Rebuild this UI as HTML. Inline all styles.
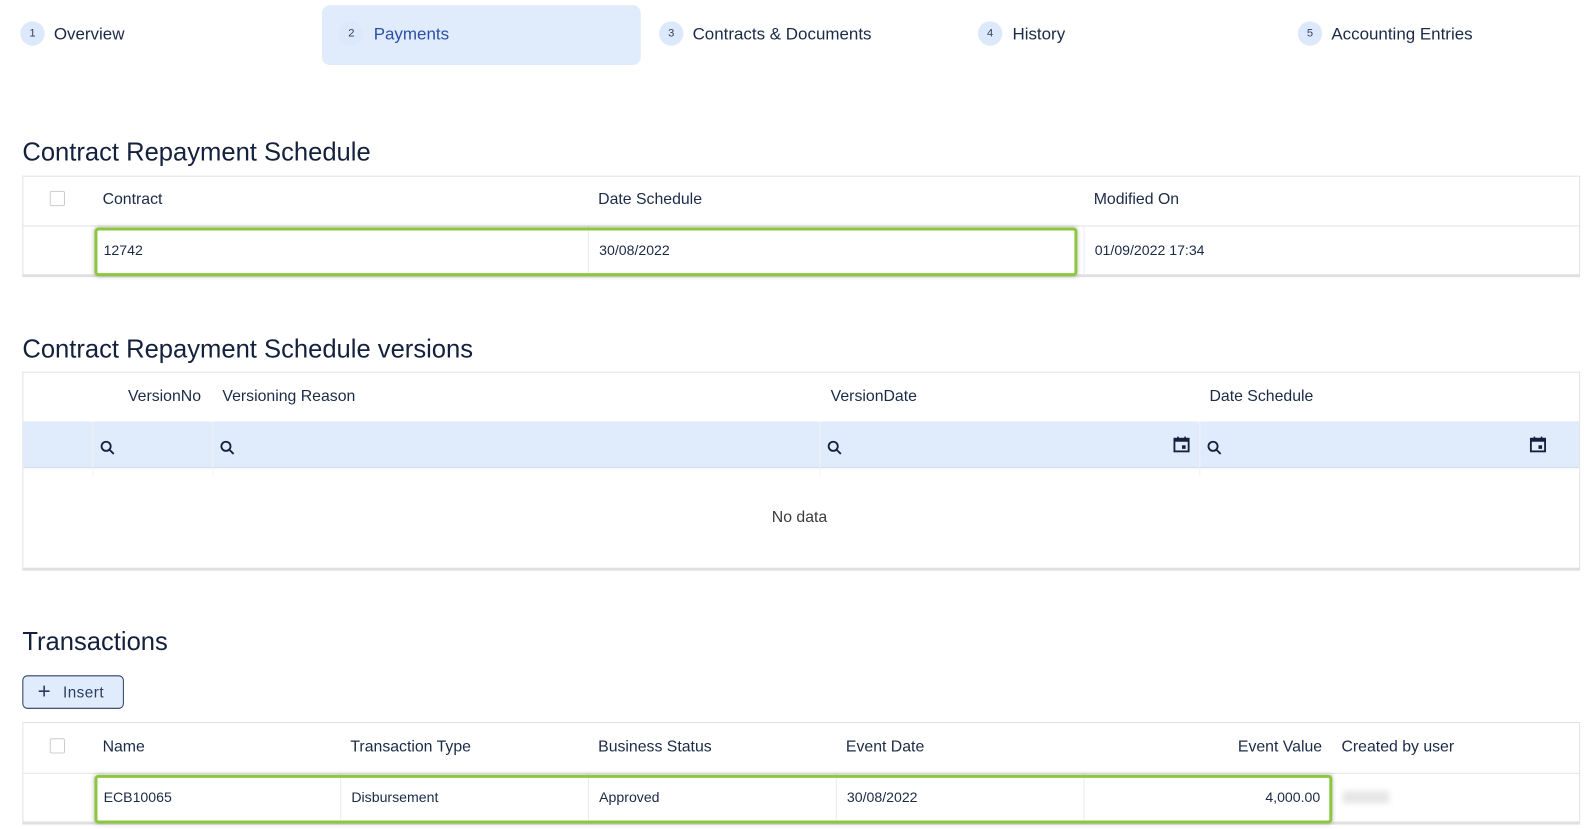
<!DOCTYPE html>
<html><head><meta charset="utf-8"><style>
*{box-sizing:border-box;margin:0;padding:0}
body{width:1592px;height:828px;background:#fff;font-family:"Liberation Sans",sans-serif;color:#1b2a47;position:relative;overflow:hidden}
#w{position:absolute;left:0;top:0;width:1568px;height:816px;transform:scale(1.0155);transform-origin:0 0}
.a{position:absolute;white-space:nowrap}
.step{font-size:16.7px}
.num{position:absolute;width:24px;height:24px;border-radius:50%;background:#dce8fb;font-size:11px;text-align:center;line-height:24px;color:#33415c}
h2{position:absolute;font-weight:normal;font-size:25.2px;color:#14213d}
.tbl{position:absolute;left:22px;width:1534px;border:1px solid #e2e2e2;border-bottom:3px solid #e0e0e0;background:#fff}
.hd{font-size:15.6px}
.cell{font-size:13.9px}
.vl{position:absolute;width:1px;background:#e8edf3}
.hl{position:absolute;border:3px solid #8dc63f;border-radius:4px;box-shadow:0 0 4px rgba(0,0,0,.25)}
.cb{position:absolute;width:15px;height:15px;border:1px solid #ccc;border-radius:2px}
</style></head><body><div id="w">
<div class="a" style="left:317px;top:5px;width:314px;height:59px;background:#e0ebfb;border-radius:8px"></div>
<div class="num" style="left:20px;top:21px">1</div><div class="a step" style="left:53px;top:24px">Overview</div>
<div class="num" style="left:334px;top:21px">2</div><div class="a step" style="left:368px;top:24px;color:#2b4fa8">Payments</div>
<div class="num" style="left:649px;top:21px">3</div><div class="a step" style="left:682px;top:24px">Contracts &amp; Documents</div>
<div class="num" style="left:963px;top:21px">4</div><div class="a step" style="left:997px;top:24px">History</div>
<div class="num" style="left:1278px;top:21px">5</div><div class="a step" style="left:1311px;top:24px">Accounting Entries</div>

<h2 style="left:22px;top:136px">Contract Repayment Schedule</h2>
<div class="tbl" style="top:173px;height:100px"></div>
<div class="a" style="left:22px;top:222px;width:1534px;height:1px;background:#e2e2e2"></div>
<div class="cb" style="left:49px;top:188px"></div>
<div class="a hd" style="left:101px;top:188px">Contract</div>
<div class="a hd" style="left:589px;top:188px">Date Schedule</div>
<div class="a hd" style="left:1077px;top:188px">Modified On</div>
<div class="vl" style="left:579px;top:223px;height:48px"></div>
<div class="vl" style="left:1067px;top:223px;height:48px"></div>
<div class="a cell" style="left:102px;top:238px">12742</div>
<div class="a cell" style="left:590px;top:238px">30/08/2022</div>
<div class="a cell" style="left:1078px;top:238px">01/09/2022 17:34</div>
<div class="hl" style="left:93px;top:224px;width:968px;height:48px"></div>

<h2 style="left:22px;top:330px">Contract Repayment Schedule versions</h2>
<div class="tbl" style="top:366px;height:196px"></div>
<div class="a" style="left:23px;top:415px;width:1532px;height:46px;background:#e0ebfb;border-bottom:1px solid #d5dde8"></div>
<div class="a hd" style="left:126px;top:382px">VersionNo</div>
<div class="a hd" style="left:219px;top:382px">Versioning Reason</div>
<div class="a hd" style="left:818px;top:382px">VersionDate</div>
<div class="a hd" style="left:1191px;top:382px">Date Schedule</div>
<div class="vl" style="left:91px;top:415px;height:54px;background:#f0f3f7"></div>
<div class="vl" style="left:209px;top:415px;height:54px;background:#f0f3f7"></div>
<div class="vl" style="left:807px;top:415px;height:54px;background:#f0f3f7"></div>
<div class="vl" style="left:1181px;top:415px;height:54px;background:#f0f3f7"></div>
<svg class="a" style="left:98px;top:433px" width="16" height="16" viewBox="0 0 16 16"><circle cx="6.5" cy="6.5" r="4.5" fill="none" stroke="#14213d" stroke-width="1.8"/><path d="M10 10l4 4" stroke="#14213d" stroke-width="1.8"/></svg>
<svg class="a" style="left:216px;top:433px" width="16" height="16" viewBox="0 0 16 16"><circle cx="6.5" cy="6.5" r="4.5" fill="none" stroke="#14213d" stroke-width="1.8"/><path d="M10 10l4 4" stroke="#14213d" stroke-width="1.8"/></svg>
<svg class="a" style="left:814px;top:433px" width="16" height="16" viewBox="0 0 16 16"><circle cx="6.5" cy="6.5" r="4.5" fill="none" stroke="#14213d" stroke-width="1.8"/><path d="M10 10l4 4" stroke="#14213d" stroke-width="1.8"/></svg>
<svg class="a" style="left:1188px;top:433px" width="16" height="16" viewBox="0 0 16 16"><circle cx="6.5" cy="6.5" r="4.5" fill="none" stroke="#14213d" stroke-width="1.8"/><path d="M10 10l4 4" stroke="#14213d" stroke-width="1.8"/></svg>
<svg class="a" style="left:1155px;top:429px" width="17" height="17" viewBox="0 0 17 17"><rect x="1.5" y="3" width="14" height="12.5" fill="none" stroke="#14213d" stroke-width="1.8"/><rect x="1.5" y="3" width="14" height="3" fill="#14213d"/><path d="M5 1v3M12 1v3" stroke="#14213d" stroke-width="1.6"/><rect x="9" y="9.5" width="3.5" height="3.5" fill="#14213d"/></svg>
<svg class="a" style="left:1506px;top:429px" width="17" height="17" viewBox="0 0 17 17"><rect x="1.5" y="3" width="14" height="12.5" fill="none" stroke="#14213d" stroke-width="1.8"/><rect x="1.5" y="3" width="14" height="3" fill="#14213d"/><path d="M5 1v3M12 1v3" stroke="#14213d" stroke-width="1.6"/><rect x="9" y="9.5" width="3.5" height="3.5" fill="#14213d"/></svg>
<div class="a hd" style="left:760px;top:501px;color:#3b3b3b">No data</div>

<h2 style="left:22px;top:618px">Transactions</h2>
<div class="a" style="left:22px;top:665px;width:100px;height:33px;border:1px solid #2a3c63;border-radius:5px;background:#e0ebfb;font-size:15px;color:#2a3c63;letter-spacing:.5px"><span style="position:absolute;left:14px;top:2px;font-size:22px;line-height:26px">+</span><span style="position:absolute;left:39px;top:8px">Insert</span></div>
<div class="tbl" style="top:711px;height:101px"></div>
<div class="a" style="left:22px;top:761px;width:1534px;height:1px;background:#e2e2e2"></div>
<div class="cb" style="left:49px;top:727px"></div>
<div class="a hd" style="left:101px;top:727px">Name</div>
<div class="a hd" style="left:345px;top:727px">Transaction Type</div>
<div class="a hd" style="left:589px;top:727px">Business Status</div>
<div class="a hd" style="left:833px;top:727px">Event Date</div>
<div class="a hd" style="left:1219px;top:727px">Event Value</div>
<div class="a hd" style="left:1321px;top:727px">Created by user</div>
<div class="vl" style="left:335px;top:762px;height:48px"></div>
<div class="vl" style="left:579px;top:762px;height:48px"></div>
<div class="vl" style="left:823px;top:762px;height:48px"></div>
<div class="vl" style="left:1067px;top:762px;height:48px"></div>
<div class="vl" style="left:1311px;top:762px;height:48px"></div>
<div class="a cell" style="left:102px;top:777px">ECB10065</div>
<div class="a cell" style="left:346px;top:777px">Disbursement</div>
<div class="a cell" style="left:590px;top:777px">Approved</div>
<div class="a cell" style="left:834px;top:777px">30/08/2022</div>
<div class="a cell" style="left:1246px;top:777px">4,000.00</div>
<div class="a" style="left:1322px;top:779px;width:46px;height:12px;background:#e6e6e6;filter:blur(3px)"></div>
<div class="hl" style="left:93px;top:763px;width:1219px;height:48px"></div>
</div></body></html>
